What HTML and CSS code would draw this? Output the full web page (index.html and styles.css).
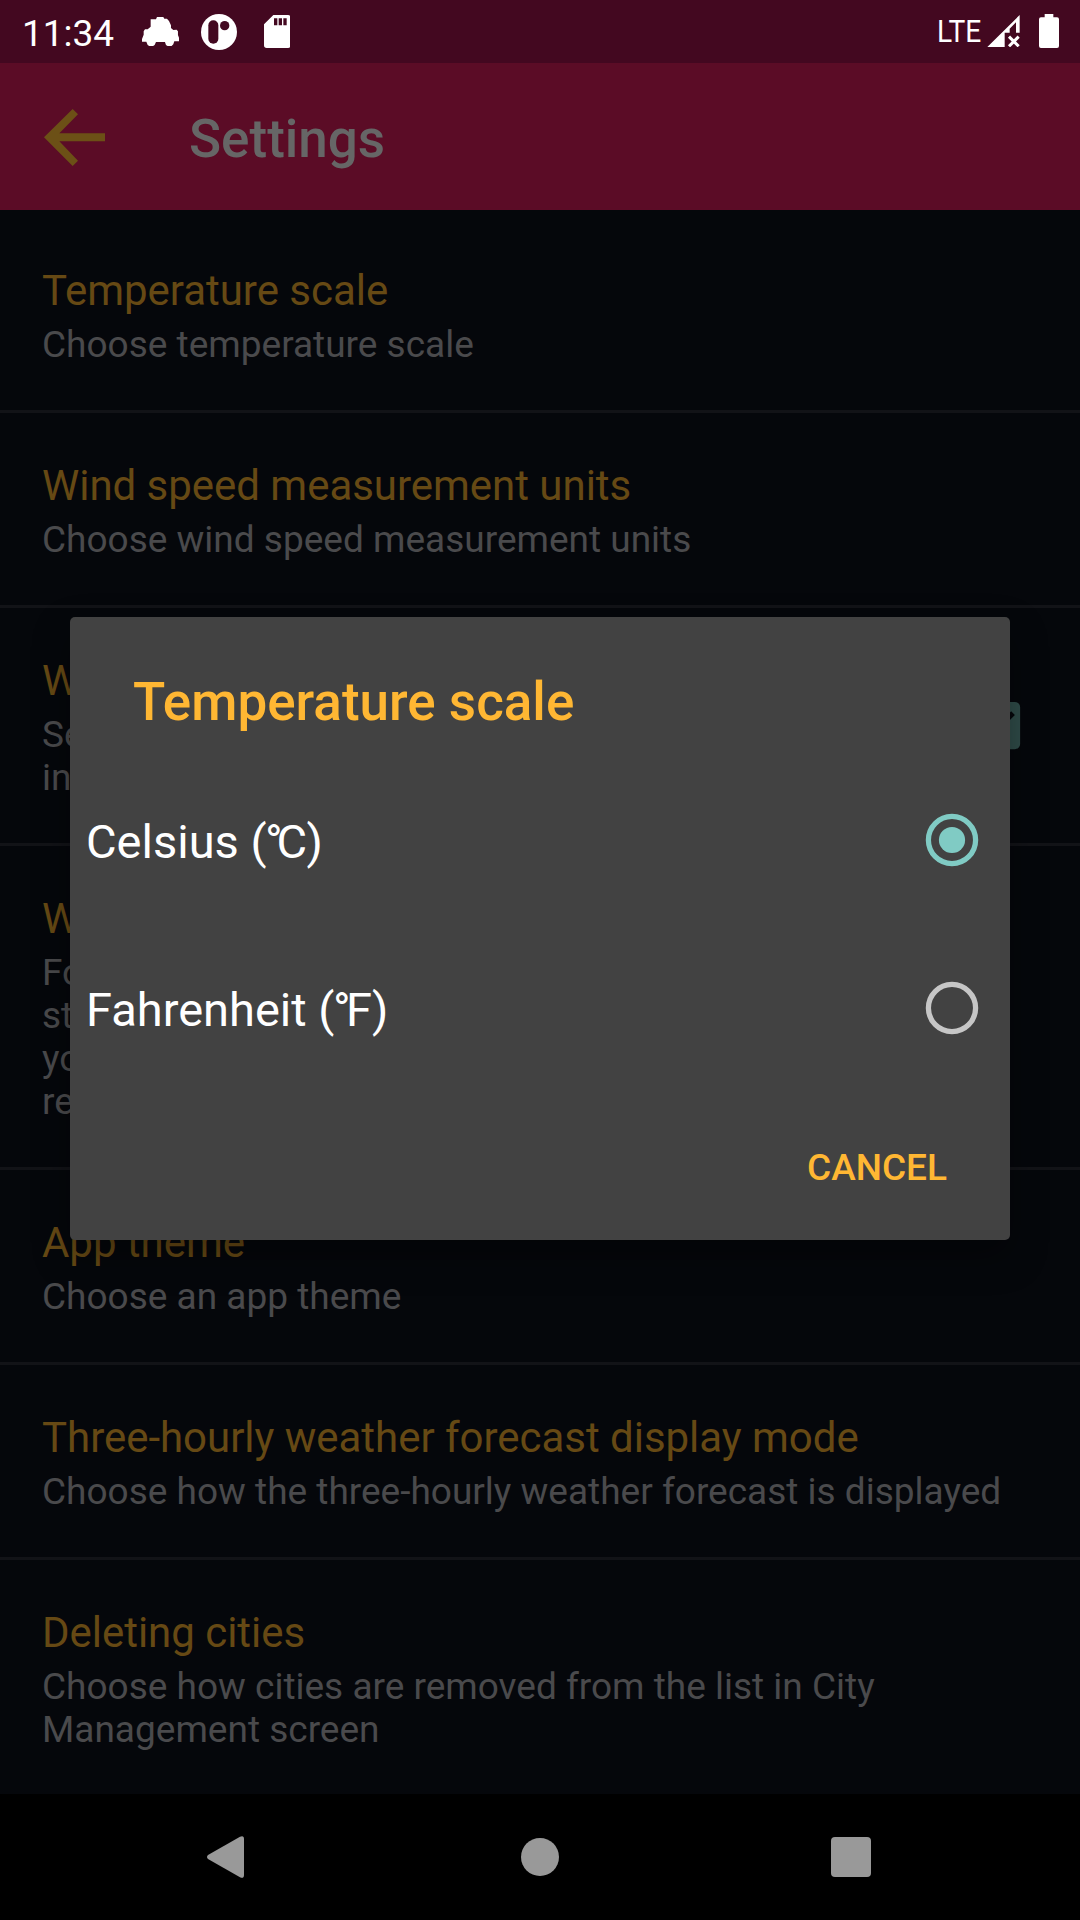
FILE: index.html
```html
<!DOCTYPE html>
<html lang="en">
<head>
<meta charset="utf-8">
<title>Settings</title>
<link rel="stylesheet" href="styles.css">
</head>
<body>
<div class="screen">
  <header class="status">
    <span class="clock">11:34</span>
    <svg class="ic-car" viewBox="37 51 112 88"><path fill="#fff" d="M63 58H79L82 51H101L104 56H112L118 63L124 76V84L131 90L141 89L145 94V105L149 116V124H134L131 133L125 139H115L109 135L106 126H79L75 135L69 139H60L54 135L50 125H37V117L42 104V94L46 88H54L63 80Z"/></svg>
    <svg class="ic-app" viewBox="213 41 108 108"><circle cx="267" cy="95" r="54" fill="#fff"/><rect x="235" y="60" width="30" height="70" rx="15" fill="#430820"/><circle cx="284" cy="76" r="14" fill="#430820"/></svg>
    <svg class="ic-sd" viewBox="401 45 80 99"><path fill="#fff" fill-rule="evenodd" d="M429 45H473Q481 45 481 53V136Q481 144 473 144H409Q401 144 401 136V73ZM431 55V76H441V55ZM445 55V76H455V55ZM459 55V76H469V55Z"/></svg>
    <span class="lte">LTE</span>
    <svg class="ic-signal" viewBox="262 44 98 97"><path fill="#fff" d="M262 141L360 44V97H349V66L330 85V97H315V141Z"/><path stroke="#fff" stroke-width="9" d="M328 109L357 138M357 109L328 138"/></svg>
    <svg class="ic-battery" viewBox="417 42 60 102"><path fill="#fff" d="M434 42H460V52H471Q477 52 477 58V138Q477 144 471 144H423Q417 144 417 138V58Q417 52 423 52H434Z"/></svg>
  </header>
  <div class="toolbar">
    <svg class="ic-back" viewBox="132 327 183 171"><path fill="#6c5016" d="M132 412L218 327L234 343L178 400H315V424H178L234 482L218 498Z"/></svg>
    <h1 class="toolbar-title">Settings</h1>
  </div>
  <main class="list">
    <section class="item"><h2 class="item-title">Temperature scale</h2><p class="item-sub">Choose temperature scale</p></section>
    <section class="item"><h2 class="item-title">Wind speed measurement units</h2><p class="item-sub">Choose wind speed measurement units</p></section>
    <section class="item item-check">
      <div><h2 class="item-title">W</h2><p class="item-sub">Se<br>in</p></div>
      <svg class="ic-check" viewBox="0 0 24 24"><path fill="#2f4b48" d="M19 3H5c-1.11 0-2 .9-2 2v14c0 1.1.89 2 2 2h14c1.11 0 2-.9 2-2V5c0-1.1-.89-2-2-2zm-9 14l-5-5 1.41-1.41L10 14.17l7.59-7.59L19 8l-9 9z"/></svg>
    </section>
    <section class="item"><h2 class="item-title">W</h2><p class="item-sub">Fo<br>st<br>yo<br>re</p></section>
    <section class="item"><h2 class="item-title">App theme</h2><p class="item-sub">Choose an app theme</p></section>
    <section class="item"><h2 class="item-title">Three-hourly weather forecast display mode</h2><p class="item-sub">Choose how the three-hourly weather forecast is displayed</p></section>
    <section class="item"><h2 class="item-title">Deleting cities</h2><p class="item-sub">Choose how cities are removed from the list in City<br>Management screen</p></section>
  </main>
  <nav class="nav">
    <svg class="nav-back" viewBox="0 0 37 42"><path fill="#999" d="M1 19L33 .7Q37-1 37 3V39Q37 43 33 41.300L1 23Q-1 21 1 19Z"/></svg>
    <svg class="nav-home" viewBox="0 0 38 38"><circle cx="19" cy="19" r="19" fill="#999"/></svg>
    <svg class="nav-recent" viewBox="0 0 40 40"><rect width="40" height="40" rx="4" fill="#999"/></svg>
  </nav>
  <div class="dialog">
    <h2 class="dialog-title">Temperature scale</h2>
    <div class="option"><span class="option-label">Celsius (<span class="degree degree-c">°</span>C)</span>
      <svg class="radio" viewBox="0 0 54 54"><circle cx="27" cy="27" r="23.600" fill="none" stroke="#80cbc4" stroke-width="5.250"/><circle cx="27" cy="27" r="13.100" fill="#80cbc4"/></svg></div>
    <div class="option"><span class="option-label">Fahrenheit (<span class="degree">°</span>F)</span>
      <svg class="radio" viewBox="0 0 54 54"><circle cx="27" cy="27" r="23.600" fill="none" stroke="#c6c6c6" stroke-width="5.250"/></svg></div>
    <div class="actions"><span class="cancel">CANCEL</span></div>
  </div>
</div>
</body>
</html>
```
FILE: styles.css
```css
* { box-sizing: border-box; }
body { margin: 0; background: #05070b; font-family: Roboto, "Noto Sans", sans-serif; }
h1, h2, p { margin: 0; font-weight: 400; }
svg { display: block; flex: none; }
.screen { position: relative; width: 1080px; height: 1920px; display: flex; flex-direction: column; overflow: hidden; background: #05070b; }

.status { height: 63px; flex: none; display: flex; align-items: flex-start; background: #430820; color: #fff; padding-left: 22px; }
.clock { font-size: 37px; line-height: 44px; margin-top: 12px; width: 120px; white-space: nowrap; }
.ic-car { width: 37.300px; height: 29.300px; margin-top: 17px; }
.ic-app { width: 36px; height: 36px; margin: 13.700px 0 0 21.700px; }
.ic-sd { width: 26.700px; height: 33px; margin: 15px 0 0 26.700px; }
.lte { margin: 12px 0 0 auto; font-size: 32px; line-height: 38px; transform: scaleX(.88); transform-origin: right; }
.ic-signal { width: 32.700px; height: 32.300px; margin: 14.700px 0 0 6px; }
.ic-battery { width: 20px; height: 34px; margin: 14px 21px 0 19px; }

.toolbar { height: 147px; flex: none; display: flex; align-items: flex-start; background: #5b0c26; padding-left: 44px; }
.ic-back { width: 61px; height: 57px; margin-top: 46px; }
.toolbar-title { margin: 45px 0 0 84px; font-size: 53px; line-height: 62px; font-weight: 500; color: #666; }

.list { flex: 1; min-height: 0; overflow: hidden; padding-top: 8px; }
.item { padding: 48px 42px 44px; border-bottom: 3px solid #121317; }
.item-title { font-size: 42px; line-height: 49px; margin-bottom: 8px; letter-spacing: -.03px; color: #664914; white-space: nowrap; }
.item-sub { font-size: 37px; line-height: 43px; color: #4a4a4c; white-space: nowrap; }
.item-check { display: flex; justify-content: space-between; padding-right: 52px; }
.ic-check { width: 63px; height: 63px; margin-top: 38px; }

.nav { height: 126px; flex: none; display: flex; align-items: center; background: #000; padding-left: 206.500px; }
.nav-back { width: 37px; height: 42px; }
.nav-home { width: 38px; height: 38px; margin-left: 277.500px; }
.nav-recent { width: 40px; height: 40px; margin-left: 272px; }

.dialog { position: absolute; left: 70px; top: 617px; width: 940px; height: 623px; padding-top: 54px; border-radius: 5px; background: #424242; box-shadow: 0 16px 36px rgba(0, 0, 0, .35); }
.dialog-title { height: 85px; padding-left: 63px; font-size: 53px; line-height: 62px; font-weight: 500; color: #ffb733; }
.option { height: 168px; display: flex; align-items: center; justify-content: space-between; padding: 0 31px 0 16px; color: #fff; }
.option-label { font-size: 47px; line-height: 56px; padding-top: 4px; white-space: nowrap; }
.degree { margin-left: -1.500px; letter-spacing: -4.500px; }
.degree-c { letter-spacing: -6px; }
.radio { width: 54px; height: 54px; }
.actions { display: flex; justify-content: flex-end; padding: 54px 63px 0 0; }
.cancel { font-size: 37px; line-height: 43px; font-weight: 500; color: #ffb733; }
```
